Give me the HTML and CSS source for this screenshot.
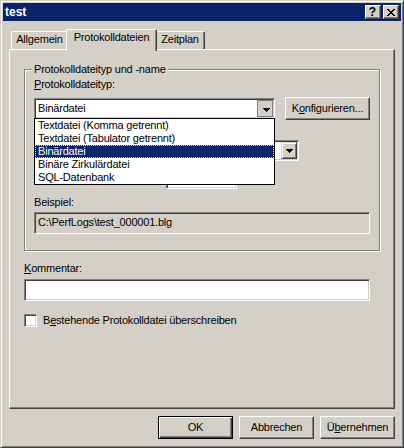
FILE: index.html
```html
<!DOCTYPE html>
<html lang="de">
<head>
<meta charset="utf-8">
<title>test</title>
<link rel="stylesheet" href="styles.css">
</head>
<body>
<div class="window">
  <div class="titlebar">
    <span class="title">test</span>
    <div class="caption-buttons">
      <span class="cap-btn help">?</span>
      <span class="cap-btn close"><svg width="8" height="7" viewBox="0 0 8 7" shape-rendering="crispEdges"><path d="M0 0h2v1H0z M6 0h2v1H6z M1 1h2v1H1z M5 1h2v1H5z M2 2h4v1H2z M3 3h2v1H3z M2 4h4v1H2z M1 5h2v1H1z M5 5h2v1H5z M0 6h2v1H0z M6 6h2v1H6z"/></svg></span>
    </div>
  </div>
  <div class="client">
    <div class="tabs">
      <div class="tab tab-general">Allgemein</div>
      <div class="tab tab-logs active">Protokolldateien</div>
      <div class="tab tab-schedule">Zeitplan</div>
    </div>
    <div class="panel">
      <div class="group">
        <div class="legend">Protokolldateityp und -name</div>
        <div class="label type-label"><u>P</u>rotokolldateityp:</div>
        <div class="row row-type">
          <div class="combo combo-type">
            <span class="combo-text">Binärdatei</span>
            <span class="drop-btn pressed"><svg width="7" height="4" viewBox="0 0 7 4" shape-rendering="crispEdges"><path d="M0 0h7v1H0z M1 1h5v1H1z M2 2h3v1H2z M3 3h1v1H3z"/></svg></span>
            <ul class="droplist">
              <li>Textdatei (Komma getrennt)</li>
              <li>Textdatei (Tabulator getrennt)</li>
              <li class="selected">Binärdatei</li>
              <li>Binäre Zirkulärdatei</li>
              <li>SQL-Datenbank</li>
            </ul>
          </div>
          <span class="btn konf">K<u>o</u>nfigurieren...</span>
        </div>
        <div class="row row-suffix">
          <div class="combo combo-suffix">
            <span class="combo-text"></span>
            <span class="drop-btn"><svg width="7" height="4" viewBox="0 0 7 4" shape-rendering="crispEdges"><path d="M0 0h7v1H0z M1 1h5v1H1z M2 2h3v1H2z M3 3h1v1H3z"/></svg></span>
          </div>
        </div>
        <div class="row row-start">
          <div class="field start-field"></div>
        </div>
        <div class="label example-label">Beispiel:</div>
        <div class="field readonly example-field">C:\PerfLogs\test_000001.blg</div>
      </div>
      <div class="label comment-label"><u>K</u>ommentar:</div>
      <div class="field comment-field"></div>
      <div class="check-row">
        <span class="checkbox"></span>
        <span class="check-label">B<u>e</u>stehende Protokolldatei überschreiben</span>
      </div>
    </div>
    <div class="buttons">
      <span class="btn dlg default">OK</span>
      <span class="btn dlg">Abbrechen</span>
      <span class="btn dlg">Ü<u>b</u>ernehmen</span>
    </div>
  </div>
</div>
</body>
</html>
```
FILE: styles.css
```css
* { box-sizing: border-box; }
html, body { margin: 0; padding: 0; background: #d4d0c8; }
body {
  font-family: "Liberation Sans", Arial, sans-serif;
  font-size: 11px;
  line-height: 13px;
  letter-spacing: -0.2px;
  color: #000;
}
u { text-decoration: underline; text-underline-offset: 1px; }

.window {
  width: 404px;
  height: 448px;
  border: 1px solid;
  border-color: #d4d0c8 #404040 #404040 #d4d0c8;
  box-shadow: inset 1px 1px #fff, inset -1px -1px #808080;
  padding: 2px;
  display: flex;
  flex-direction: column;
  background: #d4d0c8;
}

.titlebar {
  height: 18px;
  background: #0a246a;
  display: flex;
  align-items: center;
  padding: 0 2px;
  color: #fff;
}
.title { flex: 1; font-weight: bold; font-size: 12px; line-height: 18px; letter-spacing: 0; }
.caption-buttons { display: flex; gap: 2px; }
.cap-btn {
  width: 16px;
  height: 14px;
  background: #d4d0c8;
  border: 1px solid;
  border-color: #fff #404040 #404040 #fff;
  box-shadow: inset -1px -1px #808080;
  display: flex;
  align-items: center;
  justify-content: center;
  color: #000;
}
.help { font-weight: bold; font-size: 12px; line-height: 12px; padding-right: 1px; letter-spacing: 0; }
.close svg { fill: #000; }

.client {
  flex: 1;
  padding: 0 6px;
  display: flex;
  flex-direction: column;
}

.tabs {
  display: flex;
  align-items: flex-end;
  height: 20px;
  margin-top: 8px;
  padding-left: 2px;
  position: relative;
  z-index: 2;
}
.tab {
  height: 18px;
  padding-top: 1px;
  text-align: center;
  background: #d4d0c8;
  border-top: 1px solid #fff;
  border-left: 1px solid #fff;
  border-right: 1px solid #404040;
  box-shadow: inset -1px 0 #808080;
  border-radius: 2px 2px 0 0;
  white-space: nowrap;
}
.tab-general { width: 57px; }
.tab-logs { width: 91px; }
.tab-schedule { width: 50px; }
.tab.active {
  height: 22px;
  margin: 0 -2px -2px;
  position: relative;
  z-index: 3;
}

.panel {
  height: 360px;
  border: 1px solid;
  border-color: #fff #404040 #404040 #fff;
  box-shadow: inset -1px -1px #808080;
  padding: 19px 14px 0;
  position: relative;
  z-index: 1;
}

.group {
  border: 1px solid #808080;
  box-shadow: 1px 1px 0 #fff, inset 1px 1px 0 #fff;
  padding: 0 9px 16px;
  width: 356px;
}
.legend {
  width: max-content;
  background: #d4d0c8;
  margin: -7px 0 0 -2px;
  padding: 0 2px;
}
.label { height: 13px; white-space: nowrap; }
.type-label { margin-top: 2px; }

.row { display: flex; align-items: center; }
.row-type { height: 23px; margin-top: 6px; gap: 10px; }
.row-suffix { height: 21px; margin-top: 20px; }
.row-start { height: 22px; margin-top: 6px; }

.combo, .field {
  border: 1px solid;
  border-color: #808080 #fff #fff #808080;
  box-shadow: inset 1px 1px #404040, inset -1px -1px #d4d0c8;
  background: #fff;
}
.combo {
  position: relative;
  height: 21px;
  display: flex;
  align-items: center;
  padding: 1px;
}
.combo-type { width: 241px; }
.combo-suffix { width: 100px; margin-left: 165px; }
.combo-text { flex: 1; padding-left: 2px; white-space: nowrap; }
.drop-btn {
  width: 16px;
  height: 17px;
  background: #d4d0c8;
  border: 1px solid;
  border-color: #d4d0c8 #404040 #404040 #d4d0c8;
  box-shadow: inset 1px 1px #fff, inset -1px -1px #808080;
  display: flex;
  align-items: center;
  justify-content: center;
}
.drop-btn svg { fill: #000; }
.drop-btn.pressed {
  border-color: #808080;
  box-shadow: none;
}
.drop-btn.pressed svg { margin: 2px 0 0 2px; }

.droplist {
  position: absolute;
  left: -1px;
  top: 100%;
  width: 241px;
  margin: 0;
  padding: 0;
  list-style: none;
  background: #fff;
  border: 1px solid #000;
  z-index: 5;
}
.droplist li {
  height: 13px;
  line-height: 13px;
  padding-left: 3px;
  white-space: nowrap;
}
.droplist li.selected {
  background: #0a246a;
  color: #fff;
  outline: 1px dotted #f5db95;
  outline-offset: -1px;
}

.btn {
  display: flex;
  align-items: center;
  justify-content: center;
  height: 23px;
  background: #d4d0c8;
  border: 1px solid;
  border-color: #fff #404040 #404040 #fff;
  box-shadow: inset -1px -1px #808080;
  white-space: nowrap;
}
.konf { width: 85px; }

.start-field { width: 71px; height: 22px; margin-left: 132px; }

.example-label { margin-top: 7px; }
.example-field {
  margin-top: 3px;
  height: 22px;
  background: #d4d0c8;
  padding: 3px 0 0 3px;
  white-space: nowrap;
}

.comment-label { margin-top: 11px; }
.comment-field { margin-top: 4px; height: 22px; width: 346px; }

.check-row {
  display: flex;
  align-items: center;
  gap: 6px;
  margin-top: 13px;
  height: 13px;
}
.checkbox {
  width: 13px;
  height: 13px;
  background: #fff;
  border: 1px solid;
  border-color: #808080 #fff #fff #808080;
  box-shadow: inset 1px 1px #404040, inset -1px -1px #d4d0c8;
}

.buttons {
  display: flex;
  justify-content: flex-end;
  gap: 6px;
  margin-top: 7px;
}
.dlg { width: 75px; }
.dlg.default {
  border: 1px solid #000;
  box-shadow: inset 1px 1px #fff, inset -1px -1px #404040, inset -2px -2px #808080;
}
```
